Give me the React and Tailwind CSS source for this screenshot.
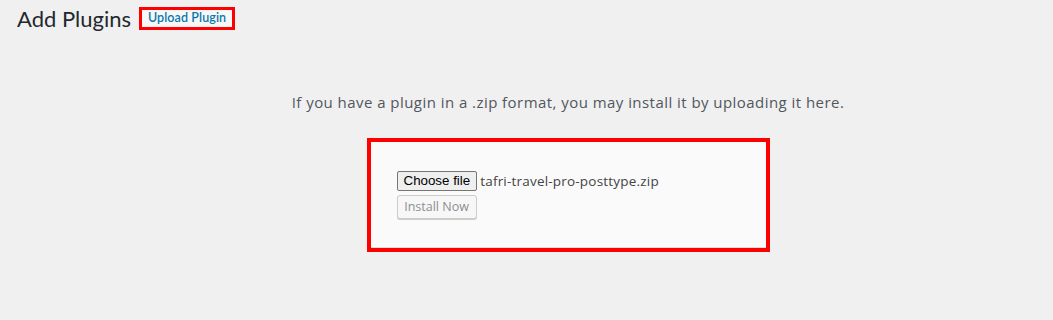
import React from 'react'

export default function App() {
    return (
        <div className="w-[1053px] h-[320px] bg-[#f0f0f0] font-['Lato',sans-serif] overflow-hidden">
            {/* page header */}
            <div className="flex items-center pl-[17px] pt-[7px]">
                <h1 className="text-[22px] leading-[23px] text-[#23282d] font-normal">Add Plugins</h1>
                <div className="ml-[8px] w-[96px] h-[23px] border-[3px] border-[#ff0000] bg-[#f7f7f7] flex items-center justify-center">
                    <span className="text-[12.5px] font-semibold text-[#0a78ad] leading-none tracking-[0.1px]">Upload Plugin</span>
                </div>
            </div>

            {/* upload area */}
            <div className="pl-[83px]">
                <p className="mt-[62px] text-center font-['Open_Sans',sans-serif] text-[15px] text-[#50575e] leading-[20px] tracking-[0.45px]">
                    If you have a plugin in a .zip format, you may install it by uploading it here.
                </p>
                <div className="mt-[26px] mx-auto w-[403px] h-[114px] border-4 border-[#ff0000] bg-[#fafafa]">
                    <div className="h-full border-b border-[#dcdcdc] pl-[26px] pt-[29px]">
                        <div className="flex items-center">
                            <div className="h-[20px] px-[6px] flex items-center bg-[#efefef] border border-[#767676] rounded-[2px] font-['Liberation_Sans',sans-serif] text-[13.33px] text-black">
                                Choose file
                            </div>
                            <span className="ml-[3px] font-['Open_Sans',sans-serif] text-[13.5px] text-[#444] tracking-[0.2px]">tafri-travel-pro-posttype.zip</span>
                        </div>
                        <button className="mt-[4px] w-[80px] h-[24px] border border-[#cccccc] rounded-[3px] bg-[#f7f7f7] font-['Open_Sans',sans-serif] text-[12.5px] text-[#8c8f94] shadow-[0_1px_0_#ccc]">
                            Install Now
                        </button>
                    </div>
                </div>
            </div>
        </div>
    )
}
